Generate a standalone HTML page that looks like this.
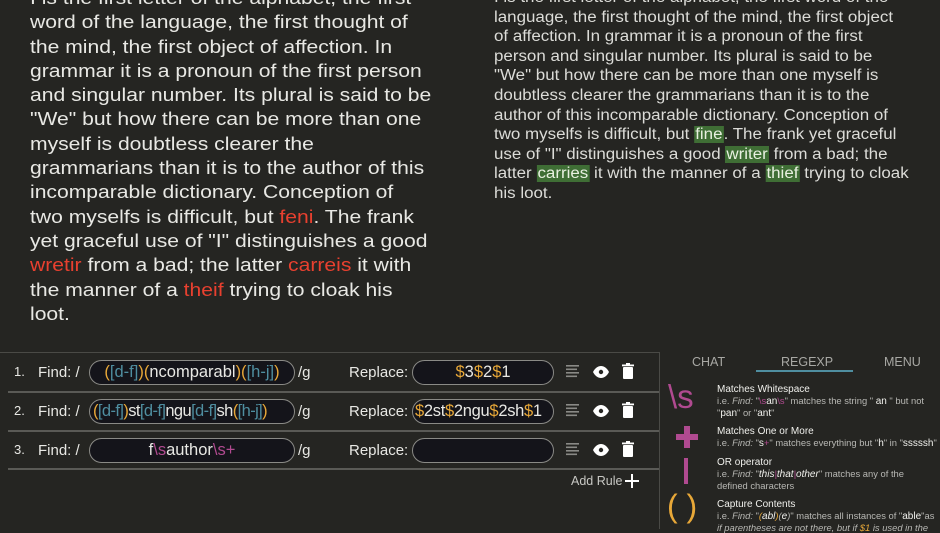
<!DOCTYPE html>
<html><head><meta charset="utf-8"><style>
*{margin:0;padding:0;box-sizing:border-box}
body{width:940px;height:529px;overflow:hidden;background:#252522;font-family:"Liberation Sans",sans-serif;color:#e8e8e4;position:relative}
.l{position:absolute;left:30px;top:-14px;font-size:18.6px;line-height:24.3px;white-space:nowrap;transform:scaleX(1.135);transform-origin:0 0}
.r{position:absolute;left:494px;top:-12px;font-size:15.4px;line-height:19.6px;white-space:nowrap;color:#dcdcd8;transform:scaleX(1.1);transform-origin:0 0}
.red{color:#e8402f}
.g{background:#3f6e35;color:#e8f0e0;padding:0 1px}
.bot{position:absolute;left:0;top:352px;width:660px;height:177px;border-top:1px solid #4a4a46}
.row{position:absolute;left:0;width:660px;height:38px}
.sep{position:absolute;left:8px;width:652px;height:2px;background:#5a5a56}
.num{position:absolute;left:14px;font-size:13px}
.find{position:absolute;left:38px;font-size:15px}
.pill{position:absolute;height:25px;border:1.5px solid #8a8a86;border-radius:13px;background:#14141a;font-size:16.5px;text-align:center;line-height:22px;white-space:nowrap;overflow:hidden}
.o{color:#e8a838}.b{color:#4f8ea0}.p{color:#b04a90}
.panel{position:absolute;left:659px;top:352px;width:281px;height:177px;border-left:1px solid #4a4a46}
.tab{position:absolute;top:3px;font-size:12.5px;color:#a8a8a4}
.it{position:absolute;left:57px;font-size:9.4px;line-height:11px;color:#b8b8b4}
.it b{color:#f0f0ec;font-weight:normal;font-size:10px}
.big{position:absolute;color:#b04a90;font-size:30px}
</style></head><body>
<div class="l">I is the first letter of the alphabet, the first<br>word of the language, the first thought of<br>the mind, the first object of affection. In<br>grammar it is a pronoun of the first person<br>and singular number. Its plural is said to be<br>"We" but how there can be more than one<br>myself is doubtless clearer the<br>grammarians than it is to the author of this<br>incomparable dictionary. Conception of<br>two myselfs is difficult, but <span class="red">feni</span>. The frank<br>yet graceful use of "I" distinguishes a good<br><span class="red">wretir</span> from a bad; the latter <span class="red">carreis</span> it with<br>the manner of a <span class="red">theif</span> trying to cloak his<br>loot.</div>
<div class="r">I is the first letter of the alphabet, the first word of the<br>language, the first thought of the mind, the first object<br>of affection. In grammar it is a pronoun of the first<br>person and singular number. Its plural is said to be<br>"We" but how there can be more than one myself is<br>doubtless clearer the grammarians than it is to the<br>author of this incomparable dictionary. Conception of<br>two myselfs is difficult, but <span class="g">fine</span>. The frank yet graceful<br>use of "I" distinguishes a good <span class="g">writer</span> from a bad; the<br>latter <span class="g">carries</span> it with the manner of a <span class="g">thief</span> trying to cloak<br>his loot.</div>

<div class="bot">
 <div class="row" style="top:8px">
  <span class="num" style="top:3px">1.</span><span class="find" style="top:3px">Find: /</span>
  <div class="pill" style="left:89px;top:-1px;width:206px"><span class="o">(</span><span class="b">[d-f]</span><span class="o">)(</span>ncomparabl<span class="o">)(</span><span class="b">[h-j]</span><span class="o">)</span></div>
  <span class="find" style="left:298px;top:3px">/g</span>
  <span class="find" style="left:349px;top:3px">Replace:</span>
  <div class="pill" style="left:412px;top:-1px;width:142px"><span class="o">$</span>3<span class="o">$</span>2<span class="o">$</span>1</div>
 </div>
 <div class="sep" style="top:38px"></div>
 <div class="row" style="top:47px">
  <span class="num" style="top:3px">2.</span><span class="find" style="top:3px">Find: /</span>
  <div class="pill" style="left:89px;top:-1px;width:206px;text-align:left;padding-left:3px;letter-spacing:-0.6px"><span class="o">(</span><span class="b">[d-f]</span><span class="o">)</span>st<span class="b">[d-f]</span>ngu<span class="b">[d-f]</span>sh<span class="o">(</span><span class="b">[h-j]</span><span class="o">)</span></div>
  <span class="find" style="left:298px;top:3px">/g</span>
  <span class="find" style="left:349px;top:3px">Replace:</span>
  <div class="pill" style="left:412px;top:-1px;width:142px;text-align:left;padding-left:2px;letter-spacing:-0.3px"><span class="o">$</span>2st<span class="o">$</span>2ngu<span class="o">$</span>2sh<span class="o">$</span>1</div>
 </div>
 <div class="sep" style="top:77px"></div>
 <div class="row" style="top:86px">
  <span class="num" style="top:3px">3.</span><span class="find" style="top:3px">Find: /</span>
  <div class="pill" style="left:89px;top:-1px;width:206px">f<span class="p">\s</span>author<span class="p">\s+</span></div>
  <span class="find" style="left:298px;top:3px">/g</span>
  <span class="find" style="left:349px;top:3px">Replace:</span>
  <div class="pill" style="left:412px;top:-1px;width:142px"></div>
 </div>
 <div class="sep" style="top:115px"></div>
 <svg style="position:absolute;left:0;top:0" width="660" height="177">
  <g fill="#8a8a86">
   <rect x="566" y="12" width="13" height="1.6"/><rect x="566" y="15.5" width="11" height="1.6"/><rect x="566" y="19" width="13" height="1.6"/><rect x="566" y="22.5" width="11" height="1.6"/>
   <rect x="566" y="51" width="13" height="1.6"/><rect x="566" y="54.5" width="11" height="1.6"/><rect x="566" y="58" width="13" height="1.6"/><rect x="566" y="61.5" width="11" height="1.6"/>
   <rect x="566" y="90" width="13" height="1.6"/><rect x="566" y="93.5" width="11" height="1.6"/><rect x="566" y="97" width="13" height="1.6"/><rect x="566" y="100.5" width="11" height="1.6"/>
  </g>
  <g fill="#fff">
   <g transform="translate(0,0)"><path d="M593 19c2-4 5-6 8-6s6 2 8 6c-2 4-5 6-8 6s-6-2-8-6z"/><circle cx="601" cy="19" r="2.2" fill="#252522"/>
    <rect x="623" y="14" width="10" height="12" rx="1"/><rect x="622" y="11.5" width="12" height="1.8"/><rect x="626" y="10" width="4" height="2"/></g>
   <g transform="translate(0,39)"><path d="M593 19c2-4 5-6 8-6s6 2 8 6c-2 4-5 6-8 6s-6-2-8-6z"/><circle cx="601" cy="19" r="2.2" fill="#252522"/>
    <rect x="623" y="14" width="10" height="12" rx="1"/><rect x="622" y="11.5" width="12" height="1.8"/><rect x="626" y="10" width="4" height="2"/></g>
   <g transform="translate(0,78)"><path d="M593 19c2-4 5-6 8-6s6 2 8 6c-2 4-5 6-8 6s-6-2-8-6z"/><circle cx="601" cy="19" r="2.2" fill="#252522"/>
    <rect x="623" y="14" width="10" height="12" rx="1"/><rect x="622" y="11.5" width="12" height="1.8"/><rect x="626" y="10" width="4" height="2"/></g>
   <rect x="625" y="127" width="14" height="2"/><rect x="631" y="121" width="2" height="14"/>
  </g>
 </svg>
 <span style="position:absolute;left:571px;top:121px;font-size:12.5px;color:#c8c8c4">Add Rule</span>
</div>

<div class="panel">
 <span class="tab" style="left:32px">CHAT</span>
 <span class="tab" style="left:121px">REGEXP</span>
 <span class="tab" style="left:224px">MENU</span>
 <div style="position:absolute;left:96px;top:18px;width:97px;height:2px;background:#4f8ea0"></div>
 <div class="big" style="left:8px;top:26px;font-size:33px">\s</div>
 <div class="it" style="top:31px"><b>Matches Whitespace</b><br>i.e. <i>Find:</i> "<span class="p">\s</span><b>an</b><span class="p">\s</span>" matches the string " <b>an</b> " but not<br>"<b>pan</b>" or "<b>ant</b>"</div>
 <svg style="position:absolute;left:16px;top:74px" width="22" height="22"><rect x="0" y="8" width="22" height="6" fill="#b04a90"/><rect x="8" y="0" width="6" height="22" fill="#b04a90"/></svg>
 <div class="it" style="top:73px"><b>Matches One or More</b><br>i.e. <i>Find:</i> "<b>s</b><span class="p">+</span>" matches everything but "<b>h</b>" in "<b>sssssh</b>"</div>
 <div style="position:absolute;left:24px;top:106px;width:4px;height:26px;background:#b04a90"></div>
 <div class="it" style="top:104px"><b>OR operator</b><br>i.e. <i>Find:</i> "<i><b>this</b><span class="p">|</span><b>that</b><span class="p">|</span><b>other</b></i>" matches any of the<br>defined characters</div>
 <div class="big" style="left:7px;top:136px;color:#e8a838;font-size:32px">( )</div>
 <div class="it" style="top:146px"><b>Capture Contents</b><br>i.e. <i>Find:</i> "<i><span class="o">(</span><b>abl</b><span class="o">)</span>(<b>e</b>)</i>" matches all instances of "<b>able</b>"as<br><i>if parentheses are not there, but if <span class="o">$1</span> is used in the</i></div>
</div>
</body></html>
